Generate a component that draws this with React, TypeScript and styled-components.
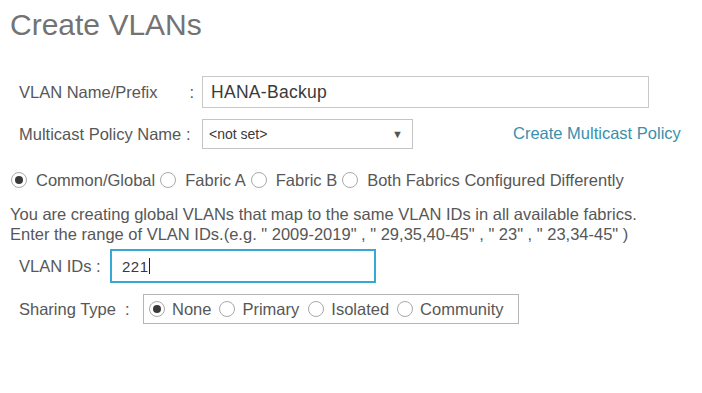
import React from 'react';
import styled, { createGlobalStyle } from 'styled-components';

const GlobalStyle = createGlobalStyle`
  html, body { margin: 0; padding: 0; background: #fff; }
  body { font-family: "Liberation Sans", Arial, sans-serif; color: #555; }
`;

const Page = styled.div`
  padding: 6px 0 0 10px;
  width: 692px;
`;

const Title = styled.h1`
  margin: 0;
  font-size: 30px;
  font-weight: normal;
  line-height: 38px;
  color: #737373;
`;

const Form = styled.div`
  display: flex;
  flex-direction: column;
  padding-left: 9px;
  margin-top: 32px;
`;

const Row = styled.div<{ $h: number; $gap?: number }>`
  display: flex;
  align-items: center;
  height: ${p => p.$h}px;
  margin-bottom: ${p => p.$gap ?? 0}px;
  font-size: 16.5px;
`;

const Label = styled.span<{ $w: number }>`
  width: ${p => p.$w}px;
  flex: none;
  white-space: pre;
  color: #575757;
`;

const TextBox = styled.div<{ $w: number; $h: number; $focus?: boolean }>`
  box-sizing: border-box;
  width: ${p => p.$w}px;
  height: ${p => p.$h}px;
  border: ${p => (p.$focus ? '2px solid #36a8d2' : '1px solid #c9c9c9')};
  display: flex;
  align-items: center;
  padding-left: ${p => (p.$focus ? 10 : 8)}px;
  font-size: ${p => (p.$focus ? 15 : 17.5)}px;
  letter-spacing: ${p => (p.$focus ? 0.5 : 0.3)}px;
  color: #3a3a3a;
`;

const Caret = styled.span`
  display: inline-block;
  width: 1px;
  height: 16px;
  background: #222;
`;

const Select = styled.div`
  box-sizing: border-box;
  width: 211px;
  height: 30px;
  border: 1px solid #c4c4c4;
  display: flex;
  align-items: center;
  justify-content: space-between;
  padding: 0 9px 0 6px;
  font-size: 14px;
  color: #3a3a3a;
`;

const Arrow = styled.span`
  font-size: 11px;
  color: #555;
`;

const Link = styled.a`
  margin-left: 100px;
  color: #3a8fac;
  font-size: 16.5px;
  text-decoration: none;
  margin-top: -2px;
`;

const RadioRow = styled.div`
  display: flex;
  align-items: center;
  margin-left: -9px;
  margin-top: 20px;
  height: 22px;
  font-size: 16.5px;
`;

const Radio = styled.span<{ $on?: boolean; $tight?: boolean }>`
  box-sizing: border-box;
  flex: none;
  width: 16px;
  height: 16px;
  border-radius: 50%;
  border: 1px solid #a9a9a9;
  background: #fff;
  display: inline-flex;
  align-items: center;
  justify-content: center;
  margin: ${p => (p.$tight ? '0 7px 0 1px' : '0 9px 0 5px')};
  &:first-child { margin-left: 1px; }
  &::after {
    content: '';
    display: ${p => (p.$on ? 'block' : 'none')};
    width: 8px;
    height: 8px;
    border-radius: 50%;
    background: #3a3a3a;
  }
`;

const Opt = styled.span<{ $gap?: number }>`
  margin-right: ${p => p.$gap ?? 0}px;
  color: #575757;
  white-space: nowrap;
`;

const Note = styled.p`
  margin: 13px 0 5px -9px;
  font-size: 16.5px;
  line-height: 20px;
  color: #575757;
  white-space: nowrap;
`;

const SharingBox = styled.div`
  box-sizing: border-box;
  width: 376px;
  height: 30px;
  border: 1px solid #b5b5b5;
  display: flex;
  align-items: center;
  padding-left: 4px;
`;

export default function App() {
  return (
    <Page>
      <GlobalStyle />
      <Title>Create VLANs</Title>
      <Form>
        <Row $h={32} $gap={11}>
          <Label $w={183}>{'VLAN Name/Prefix       :'}</Label>
          <TextBox $w={447} $h={32}>HANA-Backup</TextBox>
        </Row>
        <Row $h={30}>
          <Label $w={183}>Multicast Policy Name :</Label>
          <Select>
            <span>&lt;not set&gt;</span>
            <Arrow>▼</Arrow>
          </Select>
          <Link>Create Multicast Policy</Link>
        </Row>
        <RadioRow>
          <Radio $on />
          <Opt>Common/Global</Opt>
          <Radio />
          <Opt>Fabric A</Opt>
          <Radio />
          <Opt>Fabric B</Opt>
          <Radio />
          <Opt>Both Fabrics Configured Differently</Opt>
        </RadioRow>
        <Note>
          You are creating global VLANs that map to the same VLAN IDs in all available fabrics.
          <br />
          Enter the range of VLAN IDs.(e.g. " 2009-2019" , " 29,35,40-45" , " 23" , " 23,34-45" )
        </Note>
        <Row $h={34} $gap={11}>
          <Label $w={91}>VLAN IDs :</Label>
          <TextBox $w={266} $h={34} $focus>
            221<Caret />
          </TextBox>
        </Row>
        <Row $h={30}>
          <Label $w={124}>{'Sharing Type  :'}</Label>
          <SharingBox>
            <Radio $on $tight />
            <Opt $gap={7}>None</Opt>
            <Radio $tight />
            <Opt $gap={8}>Primary</Opt>
            <Radio $tight />
            <Opt $gap={7}>Isolated</Opt>
            <Radio $tight />
            <Opt>Community</Opt>
          </SharingBox>
        </Row>
      </Form>
    </Page>
  );
}
